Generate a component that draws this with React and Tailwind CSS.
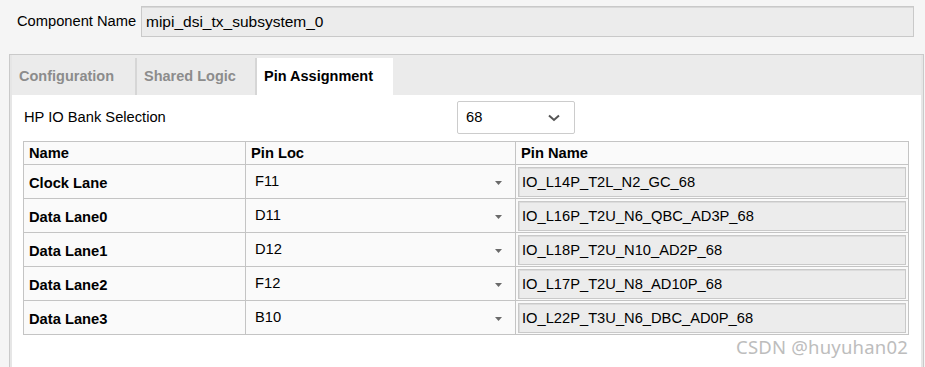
import React from "react";

const rows = [
  { name: "Clock Lane", loc: "F11", pin: "IO_L14P_T2L_N2_GC_68" },
  { name: "Data Lane0", loc: "D11", pin: "IO_L16P_T2U_N6_QBC_AD3P_68" },
  { name: "Data Lane1", loc: "D12", pin: "IO_L18P_T2U_N10_AD2P_68" },
  { name: "Data Lane2", loc: "F12", pin: "IO_L17P_T2U_N8_AD10P_68" },
  { name: "Data Lane3", loc: "B10", pin: "IO_L22P_T3U_N6_DBC_AD0P_68" },
];

const App = () => {
  return (
    <div
      className="relative w-[925px] h-[367px] overflow-hidden bg-[#f5f5f5] text-[14.7px] text-black"
      style={{ fontFamily: '"Liberation Sans", Arial, sans-serif' }}
    >
      {/* component name */}
      <div className="flex items-center pt-[6px] pl-[17px]">
        <span className="w-[124px]">Component Name</span>
        <div className="w-[773px] h-[31px] flex items-center pl-[4px] bg-[#ececec] border border-[#c9c9c9] shadow-[inset_0_1px_0_#d8d8d8] text-[15.5px]">
          mipi_dsi_tx_subsystem_0
        </div>
      </div>

      {/* tab panel */}
      <div className="mt-[17px] ml-[9px] w-[915px] h-[320px] border border-[#cacaca] bg-[#e6e6e6] px-[2px] flex flex-col">
        <div className="h-[40px] bg-[#ebebeb] flex items-end font-bold text-[14.5px]">
          <div className="h-[37px] w-[125px] flex items-center pl-[7px] text-[#8c8c8c] border-r-2 border-[#d6d6d6]">
            Configuration
          </div>
          <div className="h-[37px] w-[120px] flex items-center pl-[7px] text-[#8c8c8c] border-r-2 border-[#d6d6d6]">
            Shared Logic
          </div>
          <div className="h-[37px] w-[136px] flex items-center pl-[7px] bg-white">
            Pin Assignment
          </div>
        </div>

        <div className="flex-1 bg-white pl-[11px] pt-[6px]">
          <div className="flex items-center h-[33px]">
            <span className="w-[434px] pl-[1px]">HP IO Bank Selection</span>
            <div className="w-[118px] h-[33px] border border-[#cccccc] rounded-[2px] flex items-center justify-between pl-[8px] pr-[14px] bg-white">
              <span>68</span>
              <svg width="12" height="8" viewBox="0 0 12 8">
                <path d="M1 1.5 L6 6 L11 1.5" fill="none" stroke="#555" strokeWidth="2" />
              </svg>
            </div>
          </div>

          <table className="mt-[7px] w-[885px] border-collapse bg-[#fafafa] table-fixed">
            <colgroup>
              <col className="w-[222px]" />
              <col className="w-[270px]" />
              <col className="w-[393px]" />
            </colgroup>
            <thead>
              <tr className="h-[23px] font-bold text-left">
                <th className="border border-[#c4c4c4] pl-[5px] font-bold">Name</th>
                <th className="border border-[#c4c4c4] pl-[5px] font-bold">Pin Loc</th>
                <th className="border border-[#c4c4c4] pl-[5px] font-bold">Pin Name</th>
              </tr>
            </thead>
            <tbody>
              {rows.map((r) => (
                <tr key={r.name} className="h-[34px]">
                  <td className="border border-[#c4c4c4] pl-[5px] pt-[2px] font-bold">{r.name}</td>
                  <td className="border border-[#c4c4c4] pl-[9px] pr-[13px] pb-[2px]">
                    <div className="flex items-center justify-between">
                      <span>{r.loc}</span>
                      <svg width="7" height="4" viewBox="0 0 7 4" className="mt-[5px]">
                        <path d="M0 0 L7 0 L3.5 4 Z" fill="#6a6a6a" />
                      </svg>
                    </div>
                  </td>
                  <td className="border border-[#c4c4c4] px-[2px]">
                    <div className="h-[30px] flex items-center pl-[3px] bg-[#ececec] border border-[#c9c9c9] shadow-[inset_1px_1px_0_#dcdcdc]">
                      {r.pin}
                    </div>
                  </td>
                </tr>
              ))}
            </tbody>
          </table>
        </div>
      </div>

      <div
        className="absolute right-[17px] bottom-[6px] text-[18.5px] text-[#bdbdbd] tracking-[0.2px]"
        style={{ fontFamily: '"Noto Sans", "Open Sans", sans-serif' }}
      >
        CSDN @huyuhan02
      </div>
    </div>
  );
};

export default App;
